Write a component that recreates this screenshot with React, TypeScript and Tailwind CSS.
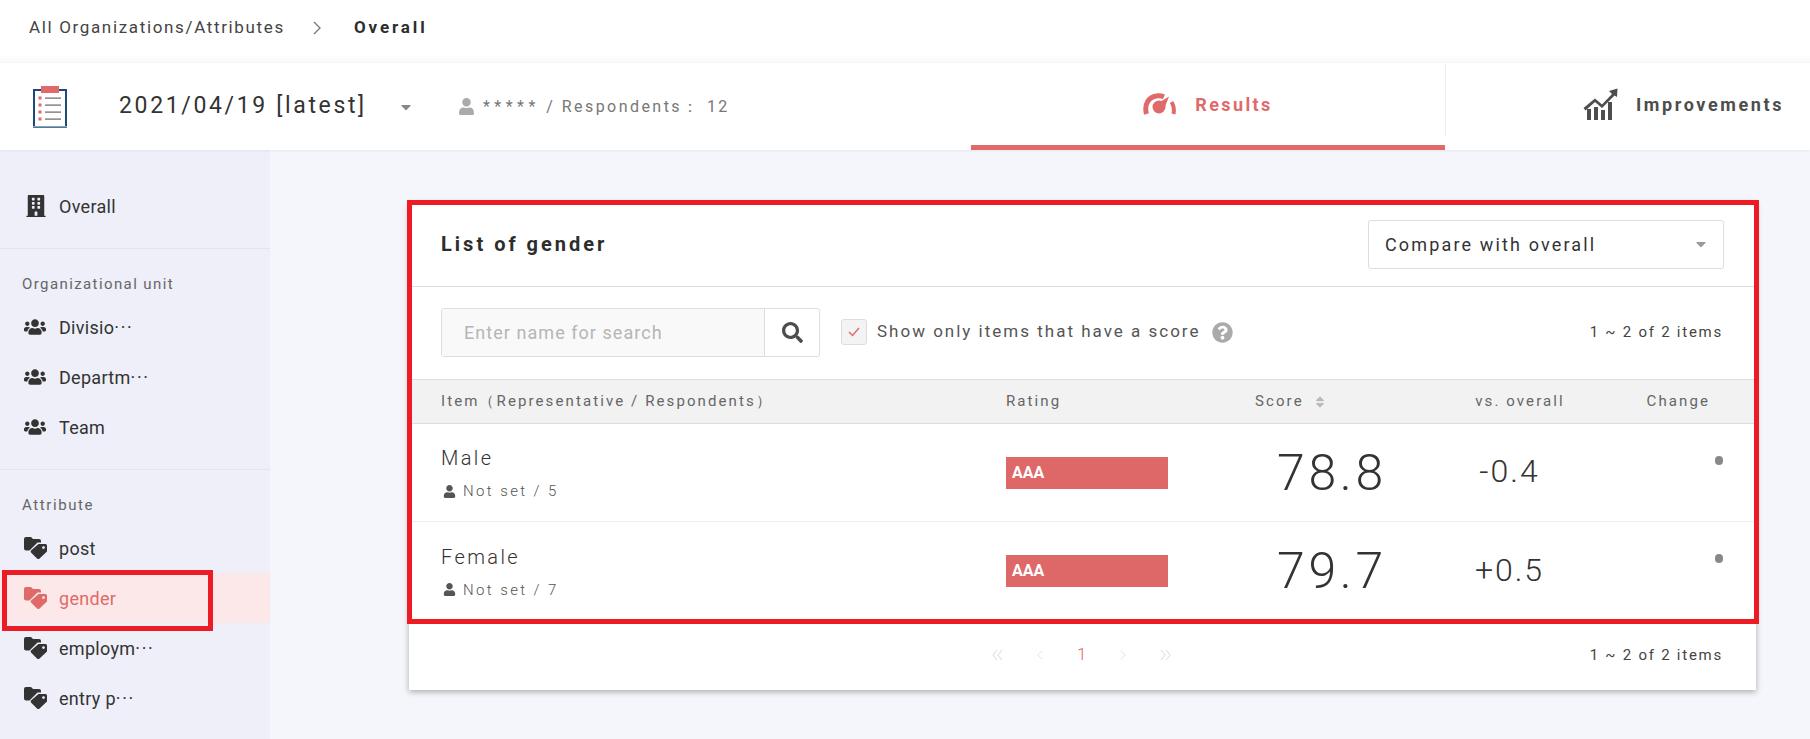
import { FaBuilding, FaCaretDown, FaQuestionCircle, FaSearch, FaSortDown, FaSortUp, FaUser, FaUsers } from "react-icons/fa";

const FONT = "font-['Roboto','Noto_Sans',sans-serif]";

function Clipboard() {
  return (
    <svg width="36" height="42" viewBox="0 0 36 42" className="shrink-0">
      <rect x="2" y="4" width="32" height="37" fill="#fff" stroke="#1f4a78" strokeWidth="2" />
      <rect x="1" y="40" width="34" height="1.5" fill="#8aa3bd" />
      <rect x="9" y="0" width="18" height="7" fill="#e06a6a" />
      {[12, 19, 26, 33].map((y) => (
        <g key={y}>
          <rect x="6.5" y={y - 1.5} width="3" height="3" fill="#e06a6a" />
          <rect x="13" y={y - 0.5} width="16" height="1.2" fill="#666" />
        </g>
      ))}
    </svg>
  );
}

function Gauge() {
  return (
    <svg width="34" height="22" viewBox="0 0 34 22" className="shrink-0" fill="none">
      <path d="M3.5 21 C1 12 5 3.5 15 2.8 C17 2.7 19 3 21 3.8" stroke="#e06a6a" strokeWidth="5" />
      <path d="M28.5 9 C30.8 12.5 31.3 17 30.5 21" stroke="#e06a6a" strokeWidth="4" />
      <circle cx="16" cy="14" r="6.5" fill="#e06a6a" />
      <path d="M17 9 L26 3.5 L21.5 15 Z" fill="#e06a6a" />
    </svg>
  );
}

function Chart() {
  return (
    <svg width="35" height="32" viewBox="0 0 35 32" className="shrink-0" fill="#4d4d4d">
      <rect x="4" y="21" width="4" height="11" />
      <rect x="11" y="19" width="4" height="13" />
      <rect x="18" y="22" width="4" height="10" />
      <rect x="25" y="14" width="4" height="18" />
      <path d="M0.5 20 L12 10.5 L19 16.5 L29 6 L26 3 L34.5 0.5 L34 9 L31.5 7.5 L19 20 L12 14 L2.5 22.5 Z" />
    </svg>
  );
}

function FolderTag({ active }: { active?: boolean }) {
  return (
    <svg width="23" height="22" viewBox="0 0 23 22" className="shrink-0" fill={active ? "#e06a6a" : "#333"}>
      <path d="M0 2 Q0 0 2 0 H7 L9 2 H15 Q17 2 17 4 V5.5 H13.5 L5.5 13.5 H2 Q0 13.5 0 11.5 Z" />
      <path d="M14.5 7 H21.5 Q23 7 23 8.5 V14.5 L15 22 Q14 22.5 13 21.5 L7 15.5 Q6.3 14.5 7 13.5 Z M19.5 9.2 A1.4 1.4 0 1 0 19.5 12 A1.4 1.4 0 1 0 19.5 9.2 Z" fillRule="evenodd" />
    </svg>
  );
}

function Chevron({ dir = "right", className = "" }: { dir?: "right" | "left"; className?: string }) {
  return (
    <svg width="8" height="14" viewBox="0 0 8 14" fill="none" stroke="currentColor" strokeWidth="1.3" className={className}>
      <path d={dir === "right" ? "M1 1 L7 7 L1 13" : "M7 1 L1 7 L7 13"} />
    </svg>
  );
}

function Double({ dir, className = "" }: { dir: "right" | "left"; className?: string }) {
  return (
    <svg width="11" height="12" viewBox="0 0 11 12" fill="none" stroke="currentColor" strokeWidth="1.1" className={className}>
      <path d={dir === "right" ? "M1 1 L5 6 L1 11 M6 1 L10 6 L6 11" : "M5 1 L1 6 L5 11 M10 1 L6 6 L10 11"} />
    </svg>
  );
}

function SideRow({ icon, label, active, more }: { icon: React.ReactNode; label: string; active?: boolean; more?: boolean }) {
  return (
    <div className={`relative h-[50px] flex items-center text-[18px] tracking-[0.3px] ${active ? "bg-[#fce8e8] text-[#e06a6a]" : "text-[#333]"}`}>
      <span className="w-[59px] pl-[24px] flex items-center">{icon}</span>
      <span>{label}</span>
      {more && <span className="tracking-[1.6px]">···</span>}
      {active && <div className="absolute left-[2px] top-[-3px] w-[211px] h-[61px] border-[5px] border-[#ed1c24]" />}
    </div>
  );
}

function Sidebar() {
  return (
    <aside className="w-[270px] shrink-0 bg-[#eeeff8]">
      <div className="pt-[31px] pb-[17px] border-b border-[#e4e5ea]">
        <SideRow icon={<FaBuilding className="text-[#333] text-[22px] ml-[1px]" />} label="Overall" />
      </div>
      <div className="pt-[25px] pb-[17px] border-b border-[#e4e5ea]">
        <div className="pl-[22px] h-[20px] leading-[20px] text-[15px] tracking-[1.4px] text-[#666] mb-[8px]">Organizational unit</div>
        <SideRow icon={<FaUsers className="text-[#333] text-[22px]" />} label="Divisio" more />
        <SideRow icon={<FaUsers className="text-[#333] text-[22px]" />} label="Departm" more />
        <SideRow icon={<FaUsers className="text-[#333] text-[22px]" />} label="Team" />
      </div>
      <div className="pt-[25px]">
        <div className="pl-[22px] h-[20px] leading-[20px] text-[15px] tracking-[1.6px] text-[#666] mb-[8px]">Attribute</div>
        <SideRow icon={<FolderTag />} label="post" />
        <SideRow icon={<FolderTag active />} label="gender" active />
        <SideRow icon={<FolderTag />} label="employm" more />
        <SideRow icon={<FolderTag />} label="entry p" more />
      </div>
    </aside>
  );
}

const COLS = "grid grid-cols-[565px_224px_210px_160px_124px] px-[32px]";

function TableRow({ name, count, score, diff, last }: { name: string; count: number; score: string; diff: string; last?: boolean }) {
  return (
    <div className={`${COLS} h-[98px] items-center ${last ? "" : "border-b border-[#eee]"}`}>
      <div>
        <div className="text-[20px] leading-[28px] tracking-[2.4px] font-light text-[#333]">{name}</div>
        <div className="mt-[9px] flex items-center gap-[7px] text-[15px] leading-[20px] tracking-[2.4px] font-light text-[#555]">
          <FaUser className="text-[13px] text-[#555] ml-[2px]" />
          Not set / {count}
        </div>
      </div>
      <div className="w-[162px] h-[32px] bg-[#de6868] flex items-center pl-[6px] text-[16px] font-bold text-white">AAA</div>
      <div className="pl-[47px] text-[50px] leading-[60px] tracking-[3.7px] font-light text-[#333]">{score}</div>
      <div className="pr-[21px] pb-[3px] text-center text-[32px] leading-[40px] tracking-[2px] font-light text-[#333]">{diff}</div>
      <div className="self-start pt-[32px] flex justify-end pr-[1px]">
        <span className="w-[8px] h-[9px] rounded-full bg-[#888]" />
      </div>
    </div>
  );
}

function ListCard() {
  return (
    <section className="relative w-[1347px] bg-white shadow-[0_2px_6px_rgba(0,0,0,0.3)]">
      <div className="absolute left-[-2px] top-[-2px] w-[1352px] h-[424px] border-[5px] border-[#ed1c24]" />
      <div className="h-[85px] pl-[32px] pr-[32px] flex items-center justify-between border-b border-[#ddd]">
        <h2 className="text-[20px] font-bold tracking-[3px] text-[#2d2d2d]">List of gender</h2>
        <div className="w-[356px] h-[49px] rounded-[3px] border border-[#ddd] pl-[16px] pr-[14px] flex items-center justify-between text-[18px] tracking-[2.15px] text-[#333]">
          Compare with overall
          <FaCaretDown className="text-[#999] text-[16px]" />
        </div>
      </div>
      <div className="h-[92px] pb-[2px] pl-[32px] pr-[33px] flex items-center">
        <div className="w-[379px] h-[49px] flex rounded-[3px] border border-[#ddd]">
          <div className="flex-1 bg-[#f9f9f9] border-r border-[#ddd] pl-[22px] flex items-center text-[18px] tracking-[1.05px] text-[#b5b5b5]">Enter name for search</div>
          <div className="w-[54px] flex items-center justify-center">
            <FaSearch className="text-[#4d4d4d] text-[21px]" />
          </div>
        </div>
        <div className="ml-[21px] w-[26px] h-[26px] rounded-[3px] border border-[#ddd] bg-[#f3f3f3] flex items-center justify-center">
          <svg width="12" height="10" viewBox="0 0 12 10" fill="none" stroke="#e06a6a" strokeWidth="1.5">
            <path d="M1 5 L4.5 8.5 L11 1" />
          </svg>
        </div>
        <span className="ml-[10px] text-[17px] tracking-[2px] text-[#555]">Show only items that have a score</span>
        <FaQuestionCircle className="ml-[12px] text-[#aaa] text-[21px]" />
        <span className="ml-auto text-[15px] tracking-[1.75px] text-[#444]">1 ~ 2 of 2 items</span>
      </div>
      <div className={`${COLS} h-[45px] items-center bg-[#f2f2f2] border-y border-[#ddd] text-[15px] tracking-[2.1px] text-[#666]`}>
        <div>Item（Representative / Respondents）</div>
        <div>Rating</div>
        <div className="pl-[25px] flex items-center gap-[9px]">
          Score
          <span className="relative w-[10px] h-[14px] text-[#bbb] text-[14px]">
            <FaSortUp className="absolute left-0 top-0" />
            <FaSortDown className="absolute left-0 top-0" />
          </span>
        </div>
        <div className="text-center">vs. overall</div>
        <div className="text-right pr-[14px]">Change</div>
      </div>
      <TableRow name="Male" count={5} score="78.8" diff="-0.4" />
      <TableRow name="Female" count={7} score="79.7" diff="+0.5" last />
      <div className="relative h-[70px] flex items-center pr-[33px]">
        <div className="absolute left-[583px] top-0 h-full flex items-center gap-[34px] text-[#e0e0e0]">
          <Double dir="left" />
          <Chevron dir="left" className="w-[6px] h-[12px]" />
          <span className="text-[17px] font-light text-[#e06a6a]">1</span>
          <Chevron dir="right" className="w-[6px] h-[12px]" />
          <Double dir="right" />
        </div>
        <span className="ml-auto text-[15px] tracking-[1.75px] text-[#444]">1 ~ 2 of 2 items</span>
      </div>
    </section>
  );
}

export default function App() {
  return (
    <div className={`${FONT} w-[1810px] h-[739px] overflow-hidden bg-[#f4f6fb] flex flex-col`}>
      <div className="h-[63px] shrink-0 bg-gradient-to-b from-white from-[85%] to-[#f8f8f8] flex items-center pl-[29px] pb-[7px] text-[17px] text-[#444] tracking-[1.65px]">
        <span>All Organizations/Attributes</span>
        <Chevron className="ml-[28px] text-[#777]" />
        <span className="ml-[33px] font-bold text-[#2d2d2d] tracking-[2.9px]">Overall</span>
      </div>
      <header className="h-[87px] shrink-0 bg-white flex relative z-10 shadow-[0_1px_3px_rgba(0,0,0,0.06)]">
        <div className="w-[971px] pl-[32px] flex items-center">
          <Clipboard />
          <span className="ml-[51px] text-[23px] tracking-[2.65px] text-[#333]">2021/04/19 [latest]</span>
          <FaCaretDown className="ml-[31px] text-[#888] text-[16px]" />
          <FaUser className="ml-[44px] text-[#aaa] text-[17px]" />
          <span className="ml-[8px] text-[16px] tracking-[2.45px] text-[#777]">
            <span className="tracking-[4.5px]">*****</span> / Respondents： 12
          </span>
        </div>
        <div className="w-[474px] border-b-[5px] border-[#e06a6a] flex items-center justify-center gap-[18px]">
          <Gauge />
          <span className="text-[18px] font-bold tracking-[2.4px] text-[#e06a6a]">Results</span>
        </div>
        <div className="flex-1">
          <div className="h-[73px] pt-[9px] border-l border-[#eee] pl-[137px] flex items-center gap-[18px]">
            <Chart />
            <span className="text-[18px] font-bold tracking-[2.6px] text-[#4d4d4d]">Improvements</span>
          </div>
        </div>
      </header>
      <div className="flex flex-1 min-h-0">
        <Sidebar />
        <main className="flex-1 pl-[139px] pt-[52px]">
          <ListCard />
        </main>
      </div>
    </div>
  );
}
